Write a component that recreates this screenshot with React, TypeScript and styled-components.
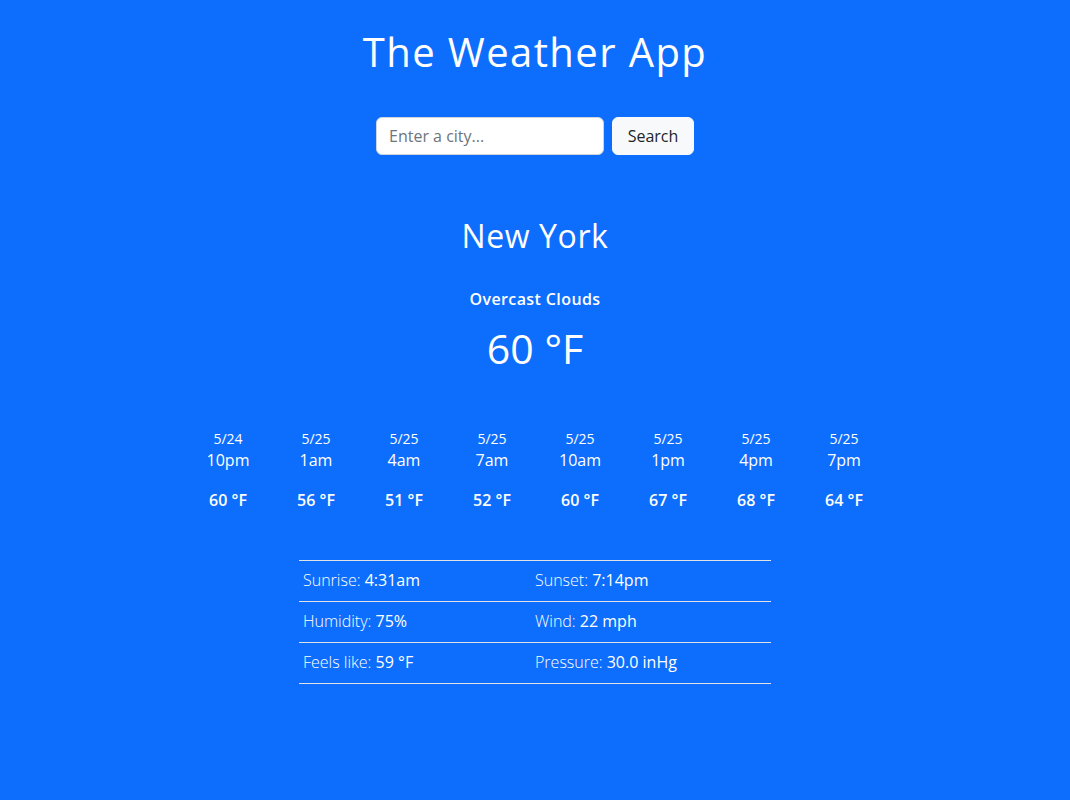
import React from "react";
import styled, { createGlobalStyle } from "styled-components";

const GlobalStyle = createGlobalStyle`
  html, body { margin: 0; padding: 0; }
  body {
    background: #0d6efd;
    color: #ffffff;
    font-family: "Open Sans", "Noto Sans", sans-serif;
  }
`;

const Page = styled.div`
  min-height: 800px;
  display: flex;
  flex-direction: column;
  align-items: center;
  padding-top: 28px;
`;

const Title = styled.h1`
  margin: 0;
  font-size: 40px;
  font-weight: 500;
  line-height: 1.2;
  letter-spacing: 1.4px;
`;

const SearchForm = styled.form`
  display: flex;
  gap: 8px;
  margin-top: 41px;
`;

const CityInput = styled.input`
  width: 228px;
  height: 38px;
  box-sizing: border-box;
  border: 1px solid #ced4da;
  border-radius: 6px;
  padding: 0 12px;
  font-family: inherit;
  font-size: 16px;
  color: #212529;
  background: #fff;
  &::placeholder { color: #6c757d; }
`;

const SearchButton = styled.button`
  height: 38px;
  width: 82px;
  border: 1px solid #f8f9fa;
  border-radius: 6px;
  background: #f8f9fa;
  color: #212529;
  font-family: inherit;
  font-size: 16px;
  cursor: pointer;
`;

const City = styled.h2`
  margin: 62px 0 0;
  font-size: 32px;
  font-weight: 500;
  line-height: 1.2;
  letter-spacing: 0.6px;
`;

const Condition = styled.div`
  margin-top: 33px;
  font-size: 16px;
  font-weight: 600;
  letter-spacing: 0.4px;
`;

const Temp = styled.div`
  margin-top: 14px;
  font-size: 41px;
  font-weight: 400;
  line-height: 1.2;
`;

const Forecast = styled.div`
  display: grid;
  grid-template-columns: repeat(8, 88px);
  margin-top: 56px;
  margin-left: 2px;
`;

const Slot = styled.div`
  display: flex;
  flex-direction: column;
  align-items: center;
`;

const SlotDate = styled.div`
  font-size: 14px;
  line-height: 18px;
`;

const SlotTime = styled.div`
  font-size: 16px;
  line-height: 24px;
`;

const SlotTemp = styled.div`
  margin-top: 18px;
  font-size: 16px;
  font-weight: 600;
  line-height: 20px;
`;

const Details = styled.table`
  margin-top: 50px;
  width: 472px;
  border-collapse: collapse;
  border-top: 1px solid #dee2e6;
`;

const Row = styled.tr`
  border-bottom: 1px solid #dee2e6;
`;

const Cell = styled.td<{ $first?: boolean }>`
  width: ${(p) => (p.$first ? "232px" : "auto")};
  height: 41px;
  box-sizing: border-box;
  padding: 0 4px 2px;
  font-size: 16px;
  font-weight: 300;
  vertical-align: middle;
`;

const Value = styled.span`
  font-weight: 500;
`;

const forecast = [
  ["5/24", "10pm", "60 °F"],
  ["5/25", "1am", "56 °F"],
  ["5/25", "4am", "51 °F"],
  ["5/25", "7am", "52 °F"],
  ["5/25", "10am", "60 °F"],
  ["5/25", "1pm", "67 °F"],
  ["5/25", "4pm", "68 °F"],
  ["5/25", "7pm", "64 °F"],
];

const details: [string, string, string, string][] = [
  ["Sunrise", "4:31am", "Sunset", "7:14pm"],
  ["Humidity", "75%", "Wind", "22 mph"],
  ["Feels like", "59 °F", "Pressure", "30.0 inHg"],
];

export default function App() {
  return (
    <>
      <GlobalStyle />
      <Page>
        <Title>The Weather App</Title>
        <SearchForm onSubmit={(e) => e.preventDefault()}>
          <CityInput placeholder="Enter a city..." />
          <SearchButton type="submit">Search</SearchButton>
        </SearchForm>
        <City>New York</City>
        <Condition>Overcast Clouds</Condition>
        <Temp>60 °F</Temp>
        <Forecast>
          {forecast.map(([d, t, temp], i) => (
            <Slot key={i}>
              <SlotDate>{d}</SlotDate>
              <SlotTime>{t}</SlotTime>
              <SlotTemp>{temp}</SlotTemp>
            </Slot>
          ))}
        </Forecast>
        <Details>
          <tbody>
            {details.map(([a, av, b, bv]) => (
              <Row key={a}>
                <Cell $first>
                  {a}: <Value>{av}</Value>
                </Cell>
                <Cell>
                  {b}: <Value>{bv}</Value>
                </Cell>
              </Row>
            ))}
          </tbody>
        </Details>
      </Page>
    </>
  );
}
